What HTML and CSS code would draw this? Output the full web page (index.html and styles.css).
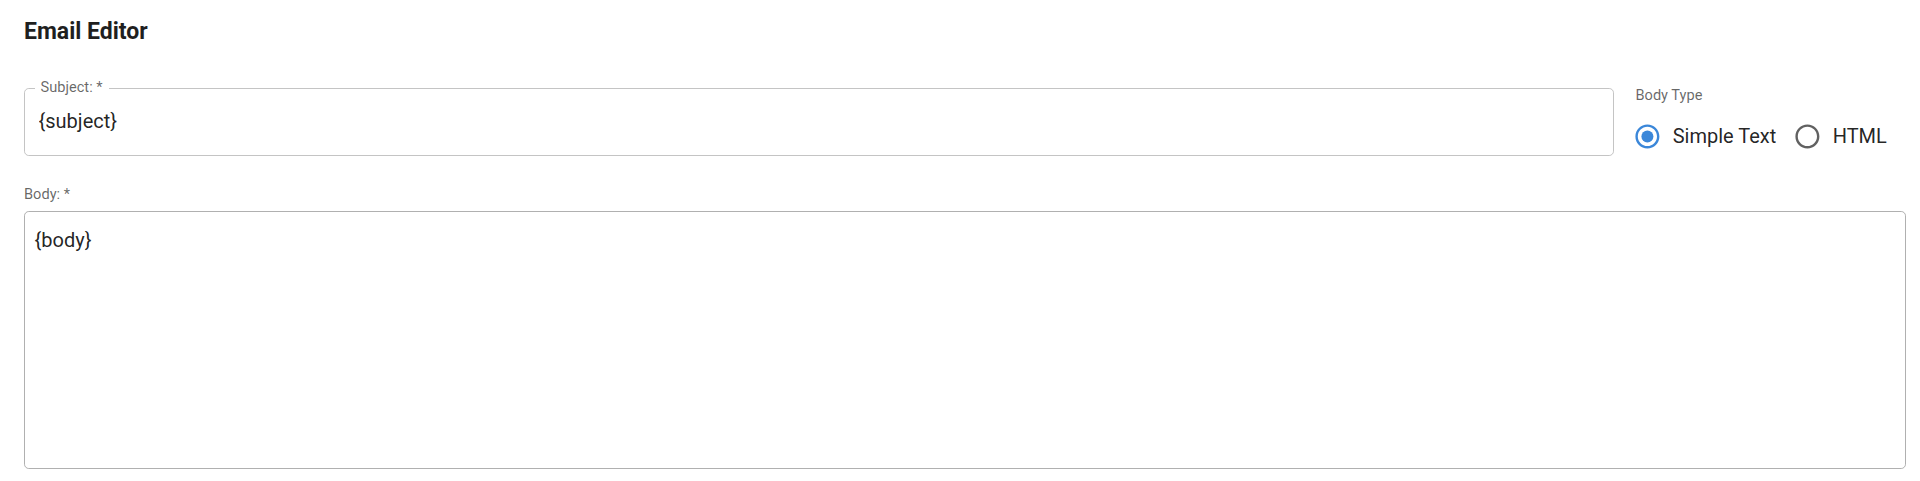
FILE: index.html
```html
<!DOCTYPE html>
<html lang="en">
<head>
<meta charset="utf-8">
<title>Email Editor</title>
<link rel="stylesheet" href="styles.css">
</head>
<body>
<main class="editor">
  <h1 class="title">Email Editor</h1>
  <div class="top-row">
    <fieldset class="subject">
      <legend class="subject-label">Subject: *</legend>
      <input class="subject-input" type="text" value="{subject}">
    </fieldset>
    <div class="body-type">
      <div class="body-type-label">Body Type</div>
      <div class="radio-row">
        <label class="radio-option">
          <span class="radio-btn checked">
            <svg viewBox="0 0 24 24" aria-hidden="true">
              <path d="M12 2C6.48 2 2 6.48 2 12s4.48 10 10 10 10-4.48 10-10S17.52 2 12 2zm0 18c-4.42 0-8-3.58-8-8s3.58-8 8-8 8 3.58 8 8-3.58 8-8 8z"/>
              <circle cx="12" cy="12" r="5"/>
            </svg>
          </span>
          <span class="radio-text">Simple Text</span>
        </label>
        <label class="radio-option">
          <span class="radio-btn">
            <svg viewBox="0 0 24 24" aria-hidden="true">
              <path d="M12 2C6.48 2 2 6.48 2 12s4.48 10 10 10 10-4.48 10-10S17.52 2 12 2zm0 18c-4.42 0-8-3.58-8-8s3.58-8 8-8 8 3.58 8 8-3.58 8-8 8z"/>
            </svg>
          </span>
          <span class="radio-text">HTML</span>
        </label>
      </div>
    </div>
  </div>
  <div class="body-field">
    <label class="body-label" for="body">Body: *</label>
    <textarea id="body" class="body-input">{body}</textarea>
  </div>
</main>
</body>
</html>
```

FILE: styles.css
```css
html, body {
  margin: 0;
  background: #ffffff;
}

body {
  font-family: Roboto, "Liberation Sans", Arial, sans-serif;
  color: rgba(0, 0, 0, 0.87);
}

.editor {
  padding: 19px 14px 0 24px;
}

.title {
  margin: 0 0 35px;
  font-size: 23px;
  line-height: 26px;
  font-weight: 700;
  color: #1f1f1f;
}

.top-row {
  display: flex;
  align-items: flex-start;
  gap: 21px;
}

.subject {
  flex: 1;
  min-width: 0;
  margin: 0;
  padding: 0;
  border: 1px solid #c4c4c4;
  border-radius: 4.8px;
}

.subject-label {
  margin-left: 9.6px;
  padding: 0 6px 3px;
  font-size: 14.6px;
  line-height: 14px;
  color: rgba(0, 0, 0, 0.6);
}

.subject-input {
  display: block;
  width: 100%;
  box-sizing: border-box;
  height: 57.5px;
  padding: 0 13.5px 9px;
  border: 0;
  outline: 0;
  background: transparent;
  font-family: Roboto, "Liberation Sans", Arial, sans-serif;
  font-size: 20px;
  color: rgba(0, 0, 0, 0.87);
}

.body-type {
  padding-top: 6.6px;
}

.body-type-label {
  font-size: 14.6px;
  line-height: 17px;
  color: rgba(0, 0, 0, 0.6);
}

.radio-row {
  display: flex;
  margin-top: 7.7px;
}

.radio-option {
  display: flex;
  align-items: center;
  margin: 0 19.2px 0 -13.2px;
  cursor: pointer;
}

.radio-btn {
  display: flex;
  padding: 10.8px;
  fill: #616161;
}

.radio-btn.checked {
  fill: #3b87d9;
}

.radio-btn svg {
  display: block;
  width: 28.8px;
  height: 28.8px;
}

.radio-text {
  font-size: 20px;
  line-height: 28px;
  color: rgba(0, 0, 0, 0.87);
}

.body-field {
  margin-top: 24.2px;
}

.body-label {
  display: block;
  margin-bottom: 7.8px;
  font-size: 14.6px;
  line-height: 17px;
  color: rgba(0, 0, 0, 0.6);
}

.body-input {
  display: block;
  width: 100%;
  box-sizing: border-box;
  height: 258px;
  margin: 0;
  padding: 15.3px 9.6px;
  border: 1px solid #b0b0b0;
  border-radius: 4.8px;
  outline: 0;
  resize: none;
  font-family: Roboto, "Liberation Sans", Arial, sans-serif;
  font-size: 20px;
  line-height: 27.6px;
  color: rgba(0, 0, 0, 0.87);
  background: #ffffff;
}
```
